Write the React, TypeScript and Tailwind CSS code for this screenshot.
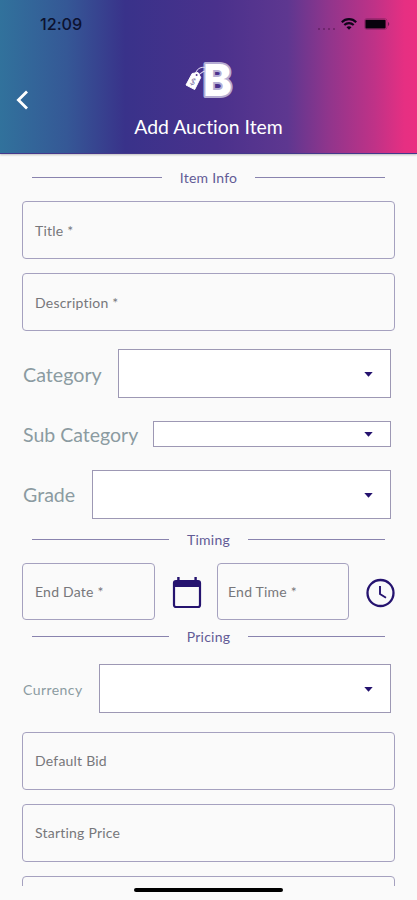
import type { ReactNode } from "react";

function StatusBar() {
  return (
    <div className="flex h-12 items-center pl-10 pr-[26px] text-[#0c1230]">
      <span className="font-[Inter,sans-serif] text-[16.2px] font-medium leading-none">12:09</span>
      <div className="ml-auto flex items-center">
        <div className="mr-[5px] mt-[9px] flex gap-[3px] opacity-50">
          <i className="size-[2px] rounded-full bg-[#40103e]" />
          <i className="size-[2px] rounded-full bg-[#40103e]" />
          <i className="size-[2px] rounded-full bg-[#40103e]" />
          <i className="size-[2px] rounded-full bg-[#40103e]" />
        </div>
        <svg className="mr-[6px] h-3 w-[18px]" viewBox="0 0 18 12" fill="none" stroke="#10041a" strokeWidth="2.1">
          <path d="M1.8 4.2C5.7.1 12.3.1 16.2 4.2" />
          <path d="M4.3 7.1c2.7-2.6 6.7-2.6 9.4 0" />
          <path d="M9 11.8 6.5 9.3c1.4-1.3 3.6-1.3 5 0Z" fill="#10041a" stroke="none" />
        </svg>
        <svg className="h-3 w-[27px]" viewBox="0 0 27 12">
          <rect x=".5" y=".5" width="22.5" height="11" rx="2.5" fill="none" stroke="#5e174b" strokeOpacity=".35" />
          <rect x="1.4" y="1.8" width="20.2" height="8.6" rx="1" fill="#08020d" />
          <path d="M24 4c1.7.7 1.7 3.3 0 4Z" fill="#5e174b" fillOpacity=".8" />
        </svg>
      </div>
    </div>
  );
}

function Logo() {
  return (
    <svg className="h-[54px] w-[50px]" viewBox="0 -7 50 54">
      <text x="19" y="35" fontFamily="Inter, sans-serif" fontSize="44" fontWeight="800" textLength="29" lengthAdjust="spacingAndGlyphs" fill="#fff" stroke="#b5add3" strokeWidth="4" strokeLinejoin="round" paintOrder="stroke">B</text>
      <path d="M11 13C13 8 17 5.5 21 6.5M12 14c4 1 5-4 10-4" fill="none" stroke="#d9d2ee" strokeWidth="1.1" />
      <path d="m8.2 12.5 5.8-1 2.7 5-6 12-8.7-4.5Z" fill="#fff" stroke="#fff" strokeLinejoin="round" />
      <circle cx="12.6" cy="14" r="1" fill="#553891" />
      <text x="6.2" y="23.8" transform="rotate(25 8.5 21)" fontFamily="Lato, sans-serif" fontSize="9" fontWeight="400" fill="#8279a8">$</text>
    </svg>
  );
}

function SectionTitle({ children, width }: { children: ReactNode; width: string }) {
  return (
    <div className="flex h-5 items-center px-8">
      <hr className="-mt-px grow border-[#8983ae]" />
      <h2 className={`${width} shrink-0 text-center text-[14px] leading-5 tracking-[0.25px] text-[#625b96]`}>{children}</h2>
      <hr className="-mt-px grow border-[#8983ae]" />
    </div>
  );
}

function Field({ label, className = "", textClass = "pl-3" }: { label: string; className?: string; textClass?: string }) {
  return (
    <div className={`flex items-center rounded-[4px] border border-[#a5a1bf] text-[14px] leading-none tracking-[0.22px] text-[#77777b] ${textClass} ${className}`}>
      {label}
    </div>
  );
}

function SelectRow({ label, labelClass, boxClass }: { label: string; labelClass: string; boxClass: string }) {
  return (
    <div className="ml-[23px] mr-[26px] flex items-center">
      <label className={`shrink-0 whitespace-nowrap text-[#8b9ba1] ${labelClass}`}>{label}</label>
      <div className={`flex grow items-center justify-end border border-[#9d98b4] bg-white pr-[17px] ${boxClass}`}>
        <svg className="mt-px h-[5px] w-[9px]" viewBox="0 0 9 5"><path d="M.3 0h8.4L4.5 4.7Z" fill="#24126e" /></svg>
      </div>
    </div>
  );
}

export default function App() {
  return (
    <div className="relative flex h-[900px] w-[417px] flex-col overflow-hidden bg-[#fafafa] font-[Lato,sans-serif] [font-variant-ligatures:none]">
      <header className="h-[154px] shrink-0 border-b border-[#44388b] bg-[linear-gradient(90deg,#31729c_0%,#355896_16%,#39328a_30%,#4a318c_52%,#5e3790_69%,#91358c_79%,#c03287_90%,#e62f82_97%,#ea2f81_100%)] shadow-[0_1px_2px_rgba(0,0,0,0.25)]">
        <StatusBar />
        <div className="grid h-[106px] grid-cols-[60px_1fr_60px]">
          <button className="flex items-start pl-[16px] pt-[42px]" aria-label="Back">
            <svg className="h-5 w-3" viewBox="0 0 12 20" fill="none" stroke="white" strokeWidth="2.8"><path d="m11 1.5-8.6 8.5 8.6 8.5" /></svg>
          </button>
          <div className="flex flex-col items-center pt-[6px]">
            <Logo />
            <h1 className="mt-[5px] whitespace-nowrap text-[19.4px] leading-7 text-white">Add Auction Item</h1>
          </div>
        </div>
      </header>

      <main className="h-[732px] shrink-0 overflow-hidden pt-[14px]">
        <SectionTitle width="w-[93px]">Item Info</SectionTitle>
        <Field label="Title *" className="mx-[22px] mt-[13px] h-[58px] pt-px" />
        <Field label="Description *" className="mx-[22px] mt-[14px] h-[58px] pt-px" />
        <div className="mt-[18px] flex flex-col gap-[23px]">
          <SelectRow label="Category" labelClass="w-[95px] pt-0.5 text-[19.7px]" boxClass="h-[49px]" />
          <SelectRow label="Sub Category" labelClass="w-[130px] pt-0.5 text-[19.5px] leading-6" boxClass="h-[26px]" />
          <SelectRow label="Grade" labelClass="w-[69px] pt-px text-[19.6px]" boxClass="h-[49px]" />
        </div>
        <div className="mt-[11px]"><SectionTitle width="w-[79px]">Timing</SectionTitle></div>
        <div className="mx-[22px] mt-[13px] flex h-[57px] items-center">
          <Field label="End Date *" className="h-full w-[133px]" />
          <svg className="ml-[17px] mt-0.5 h-8 w-[30px]" viewBox="0 0 30 32">
            <rect x="2" y="4" width="26" height="26" rx="2" fill="none" stroke="#25136f" strokeWidth="2.2" />
            <path d="M2 4h26v6H2ZM5.2 0h2.4v5H5.2ZM22.4 0h2.4v5h-2.4Z" fill="#25136f" />
          </svg>
          <Field label="End Time *" className="ml-[15px] h-full w-[132px]" textClass="pl-[10px]" />
          <svg className="ml-[16px] mt-0.5 size-[30px]" viewBox="0 0 30 30" fill="none" stroke="#25136f" strokeWidth="2.3">
            <circle cx="15.5" cy="15" r="13" /><path d="M15 8v8l6 3.7" strokeWidth="1.9" />
          </svg>
        </div>
        <div className="mt-[7px]"><SectionTitle width="w-[79px]">Pricing</SectionTitle></div>
        <div className="mt-[17px]">
          <SelectRow label="Currency" labelClass="w-[76px] pt-px text-[14px] tracking-[0.45px]" boxClass="h-[49px]" />
        </div>
        <Field label="Default Bid" className="mx-[22px] mt-[19px] h-[58px]" />
        <Field label="Starting Price" className="mx-[22px] mt-[14px] h-[58px]" />
        <Field label="" className="mx-[22px] mt-[14px] h-[58px]" />
      </main>
      <div className="mx-auto mt-[2px] h-1 w-[149px] shrink-0 rounded-full bg-black" />
    </div>
  );
}
